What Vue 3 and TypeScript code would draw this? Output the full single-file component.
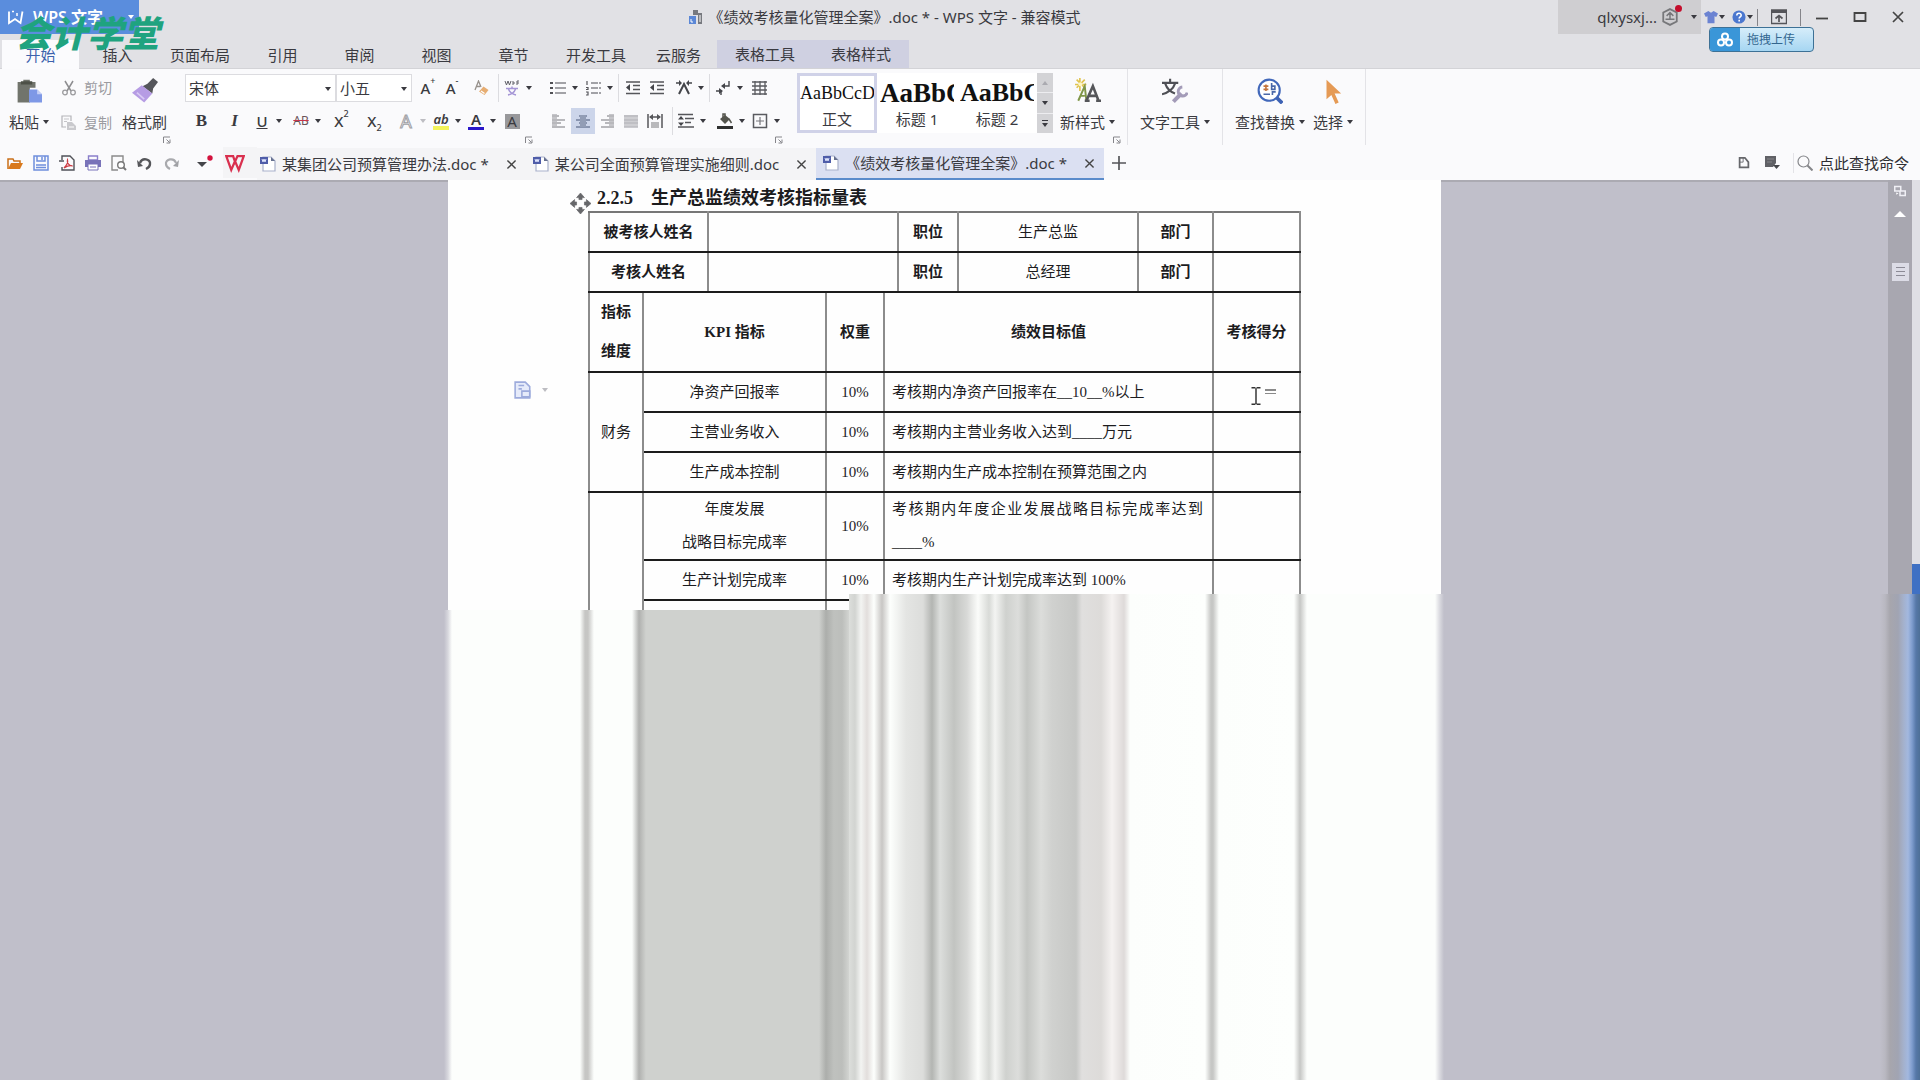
<script setup lang="ts">
import { h, ref } from 'vue'

const glyphs: Record<string, string> = {
  wps: '<path d="M1 2.5V14l6-4 5.5 4L14.500 2.500" fill="none" stroke="#fff" stroke-width="1.800"/><path d="M4 2.500h2M9 4v3" stroke="#fff" stroke-width="1.500"/>',
  docs: '<path d="M1 7h7v8H1z" fill="#5b87d6"/><path d="M5 1h5v5H5zM10 4h4v11h-4z" fill="#77797f"/><path d="M3 10v3h2M12 6v7" stroke="#fff" fill="none"/>',
  avatar: '<path d="M8 1l6 3v8l-6 3-6-3V4z" fill="none" stroke="#77777a" stroke-width="1.600"/><path d="M5 7l3-3 3 3M4 10h8M8 5v5" stroke="#77777a" fill="none" stroke-width="1.300"/>',
  shirt: '<path d="M5 1L0 4l2 4 2-1v8h8V7l2 1 2-4-5-3-3 2z" fill="#6b83d2"/>',
  help: '<circle cx="8" cy="8" r="7.500" fill="#4b77cf"/><path d="M5.500 6.200C5.500 2.800 10.600 3 10.500 6c0 1.800-2.300 1.900-2.300 3.700M8.200 11.200v1.800" fill="none" stroke="#fff" stroke-width="1.800"/>',
  boxup: '<path d="M.5 1h15v13.500H.5z" fill="none" stroke="#55555a" stroke-width="1.400"/><path d="M0 1h16v3H0z" fill="#55555a"/><path d="M8 13V7M4.500 9.500L8 6.500l3.500 3" fill="none" stroke="#55555a" stroke-width="1.700"/>',
  min: '<path d="M2 9.500h12" stroke="#444" stroke-width="1.800"/>',
  max: '<path d="M2.500 4h11v8h-11z" fill="none" stroke="#444" stroke-width="1.800"/>',
  close: '<path d="M3 3l10 10M13 3L3 13" stroke="#444" stroke-width="1.700"/>',
  cloud: '<g fill="none" stroke="#fff" stroke-width="2"><circle cx="8" cy="4.500" r="3"/><circle cx="4" cy="10.500" r="3"/><circle cx="12" cy="10.500" r="3"/></g>',
  paste: '<path d="M1 2.500h3.500V1h4v1.500H12V6H8.500v9H1z" fill="#71746c"/><path d="M3 2h7v2H3z" fill="#4d5047"/><path d="M8 7h5l3 3v5H8z" fill="#7e98e6"/><path d="M13 7v3h3" fill="#c5cff6"/>',
  cut: '<path d="M4 1l6 10M12 1L6 11" stroke="#8d8d90" stroke-width="1.500"/><g fill="none" stroke="#9b9b9e" stroke-width="1.300"><circle cx="4" cy="12.500" r="2.300"/><circle cx="12" cy="12.500" r="2.300"/></g>',
  copy: '<path d="M10 6V1H1v11h4" fill="none" stroke="#b4b4b8" stroke-width="1.200"/><path d="M3 4h5M3 6.500h3" stroke="#c4c4c8"/><path d="M6 7h5l4 4v4H6z" fill="#c9c9cd"/><path d="M8 12h5" stroke="#fff"/>',
  brush: '<path d="M6.500 5l3-1.500L13 0l3 2.500-3 4-.500 3z" fill="#55565b"/><path d="M6 4.500l6.500 5L7.500 15 0 9z" fill="#b69ce4"/><path d="M3 9l4.500 4" stroke="#d9c9f4"/>',
  eraser: '<path d="M2 10L5.500 1 8 7M3.500 6.500H7" stroke="#97918c" fill="none" stroke-width="1.300"/><path d="M6 11.500l4.500-5 5 3.500-4 5z" fill="#e6ad72"/><path d="M8 11l3.500 2.500" stroke="#fff" stroke-width="1.300"/>',
  wen: '<path d="M1 1l1.500 4L4 1l1.500 4L7 1M9 1v4M9 3h2M13 1v4M13 1h2M13 3h2" stroke="#606068" fill="none"/><path d="M2 8.500h12M8 6.500v2M4.500 9c1 3 3 5 7.500 6M11.500 9c-1 3-3 5-7.500 6" fill="none" stroke="#a596d6" stroke-width="1.500"/>',
  bullets: '<path d="M0 2h3v2H0zM0 7h3v2H0zM0 12h3v2H0z" fill="#505055"/><path d="M5 3h11M5 8h11M5 13h11" stroke="#85858a" stroke-width="1.500"/>',
  numbers: '<path d="M2 1v4M1 7.500h2v2H1M1 12h2v3H1" stroke="#55555a" fill="none" stroke-width="1.200"/><path d="M6 3h10M6 8h10M6 13h10" stroke="#85858a" stroke-width="1.500" stroke-dasharray="7 1"/>',
  outdent: '<path d="M1 2h14M8 5.500h7M8 9.500h7M1 13.500h14" stroke="#55565a" stroke-width="1.700"/><path d="M5 4l-4 3.500L5 11z" fill="#44454a"/>',
  spacing: '<path d="M3 14L8 4l5 10" fill="none" stroke="#44454a" stroke-width="2"/><path d="M0 3h3M13 3h3" stroke="#44454a" stroke-width="1.500"/><path d="M3 0l3 3-3 3zM13 0l-3 3 3 3z" fill="#44454a"/>',
  wrap: '<path d="M14 1v5H9M1 11h5v4" fill="none" stroke="#44454a" stroke-width="1.400"/><path d="M10 3L6 6l4 3zM4 8l4 3-4 3z" fill="#44454a"/>',
  grid: '<path d="M1 2h15M1 6h15M1 10h15M1 14h15M4 1v14M9 1v14M14 1v14" stroke="#5a5b60" stroke-width="1.300"/>',
  left: '<path d="M1 1h5v14H1z" fill="#c5c5c9"/><path d="M1 3h7M1 7h13M1 10h9M1 14h13" stroke="#b8b8bc" stroke-width="2"/>',
  center: '<path d="M4 3h8M1 7h14M4 10h8M1 14h14" stroke="#8995b0" stroke-width="2"/><path d="M5 2h6v12H5z" fill="#929db5"/>',
  right: '<path d="M10 1h5v14h-5z" fill="#c5c5c9"/><path d="M8 3h7M2 7h13M6 10h9M2 14h13" stroke="#b8b8bc" stroke-width="2"/>',
  justify: '<path d="M1 2h14v12H1z" fill="#ceced2"/><path d="M1 3h14M1 7h14M1 10h14M1 14h14" stroke="#bbbbc0" stroke-width="1.500"/>',
  distribute: '<path d="M1 1v14M15 1v14M3 4h10" stroke="#55565a" stroke-width="1.500"/><path d="M6 1L2 4l4 3zM10 1l4 3-4 3z" fill="#55565a"/><path d="M4 9h8v6H4z" fill="#b9b9bc"/>',
  lines: '<path d="M0 1.500h15M7 5.500h9M7 9.500h6M0 14h16" stroke="#55565a" stroke-width="1.600"/><path d="M3 3l3 3.500H0zM3 13l3-3.500H0z" fill="#44454a"/>',
  bucket: '<path d="M3 6l5-4 5 4-5 5z" fill="#54554e"/><path d="M6 5V1h2v3M12 6l2.500 4" stroke="#54554e" stroke-width="1.500" fill="none"/><path d="M0 13h16v3H0z" fill="#2f3030"/>',
  border: '<path d="M1.500 1.500h13v13h-13z" fill="none" stroke="#5a5b60" stroke-width="1.500"/><path d="M8 4v8M4 8h8" stroke="#77777c" stroke-width="1.200"/>',
  launch: '<path d="M1 14V2h13" fill="none" stroke="#85858a" stroke-width="2"/><path d="M14 7v7H7M7 7l6 6" fill="none" stroke="#85858a" stroke-width="2"/>',
  newstyle: '<path d="M3 0v8M0 4h7M1 1l5 5M6 1L1 6" stroke="#e0c34e" stroke-width="1"/><circle cx="3.300" cy="3.800" r="1.200" fill="#fff6c5"/><path d="M2 14l4-9 1 9M3 11h3" fill="none" stroke="#7f9648" stroke-width="1.200"/><path d="M7 14l4-9 3.500 9M8.500 11h5M6 14h3M13 14h3" fill="none" stroke="#55565a" stroke-width="1.600"/>',
  texttool: '<path d="M0 3h10M5 .5V3M2 3.500c1 3 3 5 6 6M8 3.500c-1 3-4 5.500-8 6.500" fill="none" stroke="#4e4f55" stroke-width="1.300"/><path d="M7 14.500l5-5" stroke="#a39bb8" stroke-width="2.500"/><path d="M12.500 5.500a2.800 2.800 0 1 0 3 3.500" fill="none" stroke="#a39bb8" stroke-width="1.800"/>',
  find: '<circle cx="7.500" cy="7.500" r="6.500" fill="#fff" stroke="#4268ba" stroke-width="1.300"/><path d="M12 12l3.500 3.500" stroke="#3d62b4" stroke-width="2.300"/><path d="M4 5h3M4 7h3M5.500 4v4" stroke="#c3743d"/><path d="M9 3v4h2V5H9M4 10h4M9.500 10.500V8.500h2" fill="none" stroke="#4a68a8"/>',
  pointer: '<path d="M4 1v12l3-2.500L9.500 16l2-1L9 9.500h4z" fill="#e59a55"/>',
  open: '<path d="M1 14V4h5l1 2h6v2" fill="none" stroke="#c96f18" stroke-width="1.500"/><path d="M4 8h12l-3 6H1z" fill="#d9791c"/>',
  save: '<path d="M1 1h14v14H1z" fill="none" stroke="#6f8fdc" stroke-width="1.500"/><path d="M4 1v5h8V1M9 2v3M3 10h10M3 12.500h10" fill="none" stroke="#6f8fdc" stroke-width="1.500"/>',
  pdf: '<path d="M3 5V1h8l4 4v10H3v-3" fill="none" stroke="#505258" stroke-width="1.400"/><path d="M0 6h5" stroke="#505258" stroke-width="1.500"/><path d="M5 13c3-3 4-6 3.500-8-1 3 2 6 5 6-3-1-6 .5-8.500 2z" fill="none" stroke="#cc3c44" stroke-width="1.300"/>',
  print: '<path d="M3.500 1h9v4h-9z" fill="none" stroke="#8a7fca" stroke-width="1.400"/><path d="M0 5h16v7H0z" fill="#7973b9"/><path d="M3 9h10v6H3z" fill="#fff" stroke="#7973b9"/><path d="M5 12h6" stroke="#7973b9"/>',
  preview: '<path d="M12 7V1H1v14h6" fill="none" stroke="#8a8a8a" stroke-width="1.400"/><circle cx="10" cy="10" r="3.300" fill="#fff" stroke="#777" stroke-width="1.400"/><path d="M12 12l3 3" stroke="#777" stroke-width="2"/>',
  undo: '<path d="M3 8c2-6 11-4 10 1 0 3-2 4-4 5" fill="none" stroke="#55565a" stroke-width="2.400"/><path d="M0 5l6 6-5 1z" fill="#55565a"/>',
  redo: '<path d="M13 8C11 2 2 4 3 9c0 3 2 4 4 5" fill="none" stroke="#a9aaae" stroke-width="2.200"/><path d="M16 5l-6 6 5 1z" fill="#a0a1a5"/>',
  more: '<path d="M0 7h10l-5 5z" fill="#44454a"/><circle cx="13" cy="3" r="2.700" fill="#d3123d"/>',
  wlogo: '<path d="M1 2.500l4 11 3-7 3 7 4-11h-5L8 7 6.500 2.500z" fill="none" stroke="#d9304f" stroke-width="1.800"/>',
  doc: '<path d="M3 1h8l4 4v10H3z" fill="#fff" stroke="#a9b1cb" stroke-width="1.200"/><path d="M11 1v4h4z" fill="#66708f"/><path d="M0 1h8v7H0z" fill="#4f5da9"/><path d="M2 3l1 3 1-3 1 3 1-3" stroke="#dce2fb" fill="none"/>',
  plus: '<path d="M8 1v14M1 8h14" stroke="#55565a" stroke-width="1.700"/>',
  history: '<path d="M3 2h6l4 5v6H3z" fill="none" stroke="#66676b" stroke-width="2"/><path d="M3 7h4V2" stroke="#66676b" fill="none"/>',
  panel: '<path d="M1 1h11v7L9 12H1z" fill="#606166"/><path d="M3 4h7M3 7h5" stroke="#85868a"/><path d="M9 10h7l-3.500 4z" fill="#44454a"/>',
  search: '<circle cx="6.500" cy="6.500" r="5.500" fill="none" stroke="#85868a" stroke-width="1.200"/><path d="M10.500 10.500l5 5" stroke="#85868a" stroke-width="2"/>',
  move: '<path d="M8 0l3 3.500H9.200V5H6.800V3.500H5zM8 16l3-3.500H9.200V11H6.800v1.500H5zM0 8l3.500-3v1.800H5v2.400H3.500V11zM16 8l-3.500-3v1.800H11v2.400h1.500V11z" fill="#66676a" stroke="#66676a" stroke-width=".5"/>',
  clip: '<path d="M1 1h9l4 4v10H1z" fill="#e6ebfa" stroke="#9dabdc" stroke-width="1.400"/><path d="M4 4h5M4 7h3M7 9h7v5H7z" fill="none" stroke="#9dabdc" stroke-width="1.400"/>',
  ibeam: '<path d="M4 .7h3.500M8.500 .7H12M8 1v14M4 15.300h3.500M8.500 15.300H12" stroke="#333" stroke-width="1.300"/>',
  windows: '<path d="M1 2h8v6H1zM8 8h7v6H8z" fill="none" stroke="#f0f0f5" stroke-width="2"/><path d="M6 11l-3-1v3z" fill="#fff"/>',
}

const Ic = (p: { n: string }) =>
  h('svg', { class: 'ic', viewBox: '0 0 16 16', 'aria-hidden': 'true', innerHTML: glyphs[p.n] })

const menuTabs = ['开始', '插入', '页面布局', '引用', '审阅', '视图', '章节', '开发工具', '云服务']
const contextTabs = ['表格工具', '表格样式']
const activeMenu = ref('开始')
const fontName = ref('宋体')
const fontSize = ref('小五')

const quick = [
  ['open', '打开'], ['save', '保存'], ['pdf', '输出为PDF'], ['print', '打印'],
  ['preview', '打印预览'], ['undo', '撤销'], ['redo', '恢复'],
]
const docTabs = [
  '某集团公司预算管理办法.doc *',
  '某公司全面预算管理实施细则.doc',
  '《绩效考核量化管理全案》.doc *',
]
const activeDoc = ref(2)

const financeRows = [
  { kpi: '净资产回报率', goal: '考核期内净资产回报率在__10__%以上' },
  { kpi: '主营业务收入', goal: '考核期内主营业务收入达到____万元' },
  { kpi: '生产成本控制', goal: '考核期内生产成本控制在预算范围之内' },
]
</script>

<template>
  <div class="app">
    <header class="titlebar">
      <button class="brand"><Ic n="wps" /><span>WPS 文字</span><i class="caret"></i></button>
      <h1><Ic n="docs" />《绩效考核量化管理全案》.doc * - WPS 文字 - 兼容模式</h1>
      <div class="window-tools">
        <button class="user">qlxysxj...<Ic n="avatar" /><i class="dot"></i><i class="caret"></i></button>
        <button class="wt small" aria-label="皮肤"><Ic n="shirt" /><i class="caret"></i></button>
        <button class="wt small" aria-label="帮助"><Ic n="help" /><i class="caret"></i></button>
        <i class="bar"></i>
        <button class="wt" aria-label="隐藏功能区"><Ic n="boxup" /></button>
        <i class="bar"></i>
        <button class="wt" aria-label="最小化"><Ic n="min" /></button>
        <button class="wt narrow" aria-label="最大化"><Ic n="max" /></button>
        <button class="wt" aria-label="关闭"><Ic n="close" /></button>
      </div>
      <button class="upload"><span class="cloud"><Ic n="cloud" /></span><span>拖拽上传</span></button>
      <div class="watermark">会计学堂</div>
    </header>

    <nav class="menu">
      <button v-for="t in menuTabs" :key="t" :class="{ active: activeMenu === t }" @click="activeMenu = t">{{ t }}</button>
      <button v-for="t in contextTabs" :key="t" class="context" @click="activeMenu = t">{{ t }}</button>
    </nav>

    <section class="ribbon">
      <div class="group clipboard">
        <button class="big"><Ic n="paste" /><span>粘贴<i class="caret"></i></span></button>
        <div class="stack">
          <button disabled><Ic n="cut" />剪切</button>
          <button disabled><Ic n="copy" />复制</button>
        </div>
        <button class="big"><Ic n="brush" /><span>格式刷</span></button>
        <button class="launcher" aria-label="剪贴板设置"><Ic n="launch" /></button>
      </div>

      <div class="group font">
        <div class="row">
          <label class="combo name"><select v-model="fontName" aria-label="字体"><option>宋体</option><option>黑体</option></select><i class="caret"></i></label>
          <label class="combo size"><select v-model="fontSize" aria-label="字号"><option>小五</option><option>五号</option></select><i class="caret"></i></label>
          <i class="gap"></i>
          <button class="cell letter">A<sup>+</sup></button>
          <button class="cell letter">A<sup>-</sup></button>
          <button class="cell loose" aria-label="清除格式"><Ic n="eraser" /></button>
          <i class="sep"></i>
          <button class="split" aria-label="拼音指南"><Ic n="wen" /><i class="caret"></i></button>
        </div>
        <div class="row">
          <button class="cell loose serif"><b>B</b></button>
          <button class="cell loose serif"><b><em>I</em></b></button>
          <button class="split letter"><span class="under">U</span><i class="caret"></i></button>
          <i class="gap"></i>
          <button class="split"><s class="strike">AB</s><i class="caret"></i></button>
          <button class="cell loose letter">X<sup>2</sup></button>
          <button class="cell loose letter">X<sub>2</sub></button>
          <i class="gap"></i>
          <button class="split"><span class="outline">A</span><i class="caret pale"></i></button>
          <button class="split"><span class="mark">ab</span><i class="caret"></i></button>
          <button class="split"><span class="ink">A</span><i class="caret"></i></button>
          <button class="cell"><span class="shade">A</span></button>
        </div>
        <button class="launcher" aria-label="字体设置"><Ic n="launch" /></button>
      </div>

      <div class="group para">
        <div class="row">
          <button class="split" aria-label="项目符号"><Ic n="bullets" /><i class="caret"></i></button>
          <button class="split" aria-label="编号"><Ic n="numbers" /><i class="caret"></i></button>
          <i class="sep"></i>
          <button class="cell" aria-label="减少缩进"><Ic n="outdent" /></button>
          <button class="cell" aria-label="增加缩进"><Ic n="outdent" /></button>
          <i class="gap"></i>
          <button class="split" aria-label="中文版式"><Ic n="spacing" /><i class="caret"></i></button>
          <i class="sep"></i>
          <button class="split" aria-label="换行"><Ic n="wrap" /><i class="caret"></i></button>
          <button class="cell" aria-label="插入表格"><Ic n="grid" /></button>
        </div>
        <div class="row">
          <button class="cell" aria-label="左对齐"><Ic n="left" /></button>
          <button class="cell on" aria-label="居中"><Ic n="center" /></button>
          <button class="cell" aria-label="右对齐"><Ic n="right" /></button>
          <button class="cell" aria-label="两端对齐"><Ic n="justify" /></button>
          <button class="cell" aria-label="分散对齐"><Ic n="distribute" /></button>
          <i class="gap"></i>
          <i class="sep"></i>
          <button class="split" aria-label="行距"><Ic n="lines" /><i class="caret"></i></button>
          <i class="gap"></i>
          <button class="split" aria-label="底纹"><Ic n="bucket" /><i class="caret"></i></button>
          <button class="split" aria-label="边框"><Ic n="border" /><i class="caret"></i></button>
        </div>
        <button class="launcher" aria-label="段落设置"><Ic n="launch" /></button>
      </div>

      <div class="gallery">
        <button class="style chosen"><span class="sample">AaBbCcD</span>正文</button>
        <button class="style"><span class="sample h1">AaBbC</span>标题 1</button>
        <button class="style"><span class="sample h2">AaBbC</span>标题 2</button>
        <div class="scroller">
          <button aria-label="上一行"><i class="caret up"></i></button>
          <button aria-label="下一行"><i class="caret"></i></button>
          <button aria-label="更多样式"><i class="dash"></i><i class="caret"></i></button>
        </div>
      </div>

      <div class="group newstyle">
        <button class="big"><Ic n="newstyle" /><span>新样式<i class="caret"></i></span></button>
        <button class="launcher" aria-label="样式设置"><Ic n="launch" /></button>
      </div>
      <div class="group tools">
        <button class="big"><Ic n="texttool" /><span>文字工具<i class="caret"></i></span></button>
      </div>
      <div class="group tools">
        <button class="big"><Ic n="find" /><span>查找替换<i class="caret"></i></span></button>
        <button class="big"><Ic n="pointer" /><span>选择<i class="caret"></i></span></button>
      </div>
    </section>

    <div class="docbar">
      <div class="quick">
        <button v-for="q in quick" :key="q[0]" :aria-label="q[1]"><Ic :n="q[0]" /></button>
      </div>
      <button class="custom" aria-label="自定义快速访问"><Ic n="more" /></button>
      <button class="home" aria-label="首页"><Ic n="wlogo" /></button>
      <div v-for="(d, i) in docTabs" :key="d" class="doctab" :class="{ active: activeDoc === i }">
        <button class="docname" @click="activeDoc = i"><Ic n="doc" />{{ d }}</button>
        <button class="x" aria-label="关闭文档"><Ic n="close" /></button>
      </div>
      <button class="add" aria-label="新建"><Ic n="plus" /></button>
      <div class="docbar-end">
        <button aria-label="历史"><Ic n="history" /></button>
        <button aria-label="窗格"><Ic n="panel" /></button>
        <label class="find"><Ic n="search" /><input type="text" placeholder="点此查找命令" aria-label="点此查找命令" /></label>
      </div>
    </div>

    <main class="workspace">
      <div class="desk">
        <article class="page">
          <div class="move"><Ic n="move" /></div>
          <h2><span>2.2.5</span>生产总监绩效考核指标量表</h2>
          <table>
            <colgroup>
              <col class="c1" /><col class="c2" /><col class="c3" /><col class="c4" /><col class="c5" />
              <col class="c6" /><col class="c7" /><col class="c8" /><col class="c9" />
            </colgroup>
            <tbody>
              <tr>
                <th colspan="2">被考核人姓名</th><td colspan="3"></td><th>职位</th><td>生产总监</td><th>部门</th><td></td>
              </tr>
              <tr>
                <th colspan="2">考核人姓名</th><td colspan="3"></td><th>职位</th><td>总经理</td><th>部门</th><td></td>
              </tr>
              <tr class="head">
                <th>指标<br />维度</th><th colspan="2">KPI 指标</th><th>权重</th><th colspan="4">绩效目标值</th><th>考核得分</th>
              </tr>
              <tr v-for="(r, i) in financeRows" :key="r.kpi">
                <td v-if="i === 0" rowspan="3">财务</td>
                <td colspan="2">{{ r.kpi }}</td><td>10%</td><td colspan="4" class="goal">{{ r.goal }}</td><td></td>
              </tr>
              <tr class="double">
                <td rowspan="3"></td>
                <td colspan="2">年度发展<br />战略目标完成率</td><td>10%</td>
                <td colspan="4" class="goal"><span class="spread">考核期内年度企业发展战略目标完成率达到</span>____%</td><td></td>
              </tr>
              <tr>
                <td colspan="2">生产计划完成率</td><td>10%</td><td colspan="4" class="goal">考核期内生产计划完成率达到 100%</td><td></td>
              </tr>
              <tr class="rest"><td colspan="2"></td><td></td><td colspan="4"></td><td></td></tr>
            </tbody>
          </table>
          <button class="clip" aria-label="粘贴选项"><Ic n="clip" /><i class="caret pale"></i></button>
          <div class="ibeam"><Ic n="ibeam" /><i></i></div>
          <div class="smear left"></div>
          <div class="smear right"></div>
        </article>
      </div>
      <aside class="scroll">
        <Ic n="windows" />
        <i class="tri"></i>
        <i class="thumb"></i>
      </aside>
      <div class="edge"></div>
      <div class="edge-smear"></div>
    </main>
  </div>
</template>

<style>
body {
  margin: 0;
}
</style>

<style scoped>
.app {
  display: flex;
  flex-direction: column;
  height: 100vh;
  overflow: hidden;
  font: 15px/20px "Noto Sans", "Noto Sans CJK SC", sans-serif;
  color: #3a3a40;
  background: #e1e1e5;
}
* {
  box-sizing: border-box;
}
button {
  display: flex;
  align-items: center;
  padding: 0;
  border: 0;
  background: none;
  font: inherit;
  color: inherit;
  white-space: nowrap;
}
.ic {
  display: block;
  flex: none;
  width: 16px;
  height: 16px;
}
.caret {
  flex: none;
  width: 0;
  border: 3px solid transparent;
  border-top: 4px solid #3a3a40;
  border-bottom: 0;
}
.caret.pale {
  border-top-color: #bdbdc2;
}
.caret.up {
  border-top: 0;
  border-bottom: 4px solid #aaaab0;
}

.titlebar {
  position: relative;
  display: flex;
  justify-content: space-between;
  height: 40px;
  flex: none;
}
.brand {
  width: 139px;
  height: 34px;
  padding-left: 8px;
  gap: 9px;
  background: #5a8ddd;
  color: #fff;
  font-size: 16px;
  font-weight: 600;
}
.brand .caret {
  margin-left: auto;
  margin-right: 5px;
  border-top-color: #fff;
}
h1 {
  display: flex;
  align-items: center;
  gap: 4px;
  height: 34px;
  margin: 0 0 0 72px;
  font-size: 15px;
  font-weight: 400;
  white-space: nowrap;
}
.window-tools {
  display: flex;
  align-items: center;
  height: 34px;
  padding-right: 1px;
}
.user {
  position: relative;
  width: 143px;
  height: 34px;
  padding-right: 4px;
  justify-content: flex-end;
  gap: 4px;
  background: #cfced1;
}
.user .ic {
  width: 18px;
  height: 18px;
}
.user .caret {
  margin-left: 8px;
}
.dot {
  position: absolute;
  right: 19px;
  top: 5px;
  width: 7px;
  height: 7px;
  border-radius: 50%;
  background: #c40d2c;
}
.wt {
  width: 42px;
  height: 34px;
  justify-content: center;
}
.wt.small {
  width: 28px;
  gap: 1px;
}
.wt.small .ic {
  width: 14px;
  height: 14px;
}
.wt.narrow {
  width: 34px;
}
.bar {
  width: 1px;
  height: 17px;
  background: #85858a;
}
.upload {
  position: absolute;
  right: 106px;
  top: 27px;
  z-index: 3;
  width: 105px;
  height: 25px;
  gap: 7px;
  overflow: hidden;
  border: 1px solid #3d7196;
  border-radius: 4px;
  background: linear-gradient(#d6edfa, #a6d6f2);
  color: #33668f;
  font-size: 12px;
}
.cloud {
  display: grid;
  place-items: center;
  width: 30px;
  height: 25px;
  background: #3a96d8;
}
.cloud .ic {
  width: 20px;
}
.watermark {
  position: absolute;
  left: 15px;
  top: 9px;
  z-index: 3;
  color: #1fa37f;
  font: italic 900 36px/44px "Noto Sans CJK SC", sans-serif;
  white-space: nowrap;
  pointer-events: none;
}

.menu {
  display: flex;
  flex: none;
  height: 29px;
  padding-left: 2px;
  border-bottom: 1px solid #d3d3d7;
}
.menu button {
  justify-content: center;
  min-width: 77px;
  height: 29px;
  padding: 0 14px;
}
.menu .active {
  background: #fbfbfd;
  color: #3c62ad;
}
.menu .context {
  width: 96px;
  height: 28px;
  background: #cfd0e1;
}

.ribbon {
  display: flex;
  flex: none;
  height: 76px;
  background: #fafafc;
}
.group {
  position: relative;
  flex: none;
  padding-top: 3px;
}
.clipboard {
  display: flex;
  width: 185px;
  padding-left: 7px;
}
.font {
  width: 362px;
}
.para {
  width: 250px;
}
.newstyle,
.tools {
  display: flex;
  gap: 4px;
  padding-left: 5px;
  padding-right: 10px;
  border-right: 1px solid #e3e3e7;
}
.tools {
  padding-left: 10px;
}
.big {
  flex-direction: column;
  height: 68px;
  padding: 6px 2px 0;
  gap: 8px;
}
.big .ic {
  width: 26px;
  height: 26px;
}
.big span {
  display: flex;
  align-items: center;
  gap: 4px;
}
.stack {
  display: flex;
  flex-direction: column;
  gap: 3px;
  width: 69px;
  padding-left: 10px;
  flex: none;
}
.stack button {
  height: 32px;
  gap: 7px;
  font-size: 14px;
  color: #9b9ba0;
}
.launcher {
  position: absolute;
  right: 14px;
  bottom: 1px;
}
.newstyle .launcher {
  right: 6px;
}
.launcher .ic {
  width: 8px;
  height: 8px;
}
.row {
  display: flex;
  align-items: center;
  height: 32px;
}
.row + .row {
  margin-top: 1px;
}
.combo {
  position: relative;
  height: 28px;
  border: 1px solid #dcdce0;
  background: #fff;
}
.combo.name {
  width: 151px;
}
.combo.size {
  width: 76px;
}
.combo select {
  width: 100%;
  height: 26px;
  padding: 0 3px;
  border: 0;
  background: none;
  appearance: none;
  font: inherit;
  color: inherit;
}
.combo .caret {
  position: absolute;
  right: 4px;
  top: 12px;
}
.cell {
  width: 24px;
  height: 26px;
  justify-content: center;
}
.cell.loose {
  width: 33px;
}
.cell.on {
  background: #ccd5ea;
}
.split {
  width: 35px;
  height: 26px;
  padding-left: 3px;
  gap: 6px;
}
.split > :first-child {
  width: 16px;
  text-align: center;
}
.gap {
  width: 4px;
}
.sep {
  width: 1px;
  height: 28px;
  margin: 0 2px 0 1px;
  background: #dcdce0;
}
.letter {
  font-size: 15px;
  font-weight: 500;
}
.letter sup,
.letter sub {
  font-size: 9px;
  line-height: 12px;
}
.letter sup {
  align-self: flex-start;
}
.letter sub {
  align-self: flex-end;
}
.serif {
  font: 17px/20px "Liberation Serif", serif;
}
.under {
  text-decoration: underline;
}
.strike {
  color: #6b5358;
  text-decoration-color: #c8354c;
  font-size: 12px;
}
.outline {
  color: #fafafc;
  -webkit-text-stroke: 1px #a0a0a5;
  font-size: 18px;
}
.mark,
.ink {
  height: 18px;
  font-size: 13px;
  line-height: 14px;
  font-weight: 600;
}
.mark {
  border-bottom: 4px solid #f3f35b;
  font-style: italic;
}
.ink {
  border-bottom: 3px solid #2a17c9;
  font-size: 15px;
}
.shade {
  width: 15px;
  background: #98989b;
  line-height: 15px;
}

.gallery {
  display: flex;
  flex: none;
  height: 60px;
  margin-top: 4px;
}
.style {
  flex-direction: column;
  width: 80px;
  overflow: hidden;
  border: 3px solid #fff;
  background: #fff;
}
.style.chosen {
  border-color: #d0d2e8;
}
.sample {
  align-self: flex-start;
  height: 33px;
  font: 18px/34px "Liberation Serif", serif;
  color: #111;
}
.sample.h1 {
  font-size: 27px;
  font-weight: 700;
}
.sample.h2 {
  font-size: 26px;
  font-weight: 700;
}
.scroller {
  display: flex;
  flex-direction: column;
  gap: 1px;
  width: 16px;
  background: #ededf0;
}
.scroller button {
  flex: 1;
  flex-direction: column;
  justify-content: center;
  gap: 2px;
  background: #d3d3d6;
}
.dash {
  width: 6px;
  height: 1px;
  background: #3a3a40;
}

.docbar {
  display: flex;
  flex: none;
  align-items: center;
  height: 35px;
  background: #fafafc;
}
.quick {
  display: flex;
  gap: 10px;
  padding-left: 7px;
}
.custom {
  margin-left: 18px;
}
.home {
  width: 34px;
  height: 31px;
  margin-left: 10px;
  padding-left: 2px;
  background: #f4f4f6;
}
.home .ic {
  width: 20px;
  height: 20px;
}
.doctab {
  display: flex;
  height: 32px;
  margin-top: 3px;
  padding: 0 8px 0 3px;
  gap: 16px;
  background: #f4f4f6;
}
.doctab + .doctab {
  padding-left: 7px;
}
.docname {
  gap: 6px;
}
.x .ic {
  width: 13px;
  height: 13px;
}
.doctab.active {
  border-bottom: 2px solid #5a8bcb;
  background: #dbe0f2;
}
.add {
  margin-left: 7px;
}
.docbar-end {
  display: flex;
  align-items: center;
  gap: 13px;
  margin-left: auto;
}
.docbar-end > button:first-child .ic {
  width: 14px;
  height: 14px;
}
.find {
  display: flex;
  align-items: center;
  gap: 6px;
  padding-left: 3px;
  border-left: 1px solid #e3e3e7;
}
.find input {
  width: 101px;
  padding: 0;
  border: 0;
  outline: 0;
  background: none;
  font: inherit;
  color: #2e2e33;
}
.find input::placeholder {
  color: #2e2e33;
}

.workspace {
  position: relative;
  display: flex;
  flex: 1;
  min-height: 0;
  background: #c0bfca;
  box-shadow: inset 0 2px 0 #abaab2;
}
.desk {
  display: flex;
  flex: 1;
  justify-content: center;
  padding-left: 1px;
}
.page {
  position: relative;
  width: 993px;
  padding: 8px 141px 0 140px;
  background: #fefefe;
  color: #1c1c1e;
}
h2 {
  display: flex;
  gap: 18px;
  margin: 0 0 3px;
  padding-left: 9px;
  font: 700 18px/20px "Liberation Serif", "Noto Sans CJK SC", serif;
  white-space: nowrap;
}
table {
  width: 713px;
  table-layout: fixed;
  border-collapse: collapse;
  font: 15px/20px "Liberation Serif", "Noto Sans CJK SC", serif;
}
.c1 { width: 54px; }
.c2 { width: 65px; }
.c3 { width: 118px; }
.c4 { width: 58px; }
.c5 { width: 14px; }
.c6 { width: 60px; }
.c7 { width: 180px; }
.c8 { width: 75px; }
.c9 { width: 87px; }
th,
td {
  height: 40px;
  padding: 0;
  border: 2px solid #1c1c1c;
  border-left-color: #8c8c8c;
  border-right-color: #8c8c8c;
  text-align: center;
}
tr:first-child > * {
  border-top-color: #777;
}
.head > * {
  height: 80px;
  line-height: 39px;
}
.double > * {
  height: 68px;
  line-height: 33px;
}
.rest > * {
  border-bottom: 0;
}
.goal {
  padding: 0 9px 0 7px;
  text-align: left;
}
.spread {
  display: block;
  text-align: justify;
  text-align-last: justify;
  white-space: nowrap;
}
.move {
  position: absolute;
  left: 122px;
  top: 13px;
}
.move .ic {
  width: 21px;
  height: 21px;
}
.clip {
  position: absolute;
  left: 66px;
  top: 201px;
  gap: 10px;
}
.clip .ic {
  width: 18px;
  height: 18px;
}
.ibeam {
  position: absolute;
  left: 799px;
  top: 207px;
  display: flex;
}
.ibeam .ic {
  width: 18px;
  height: 18px;
}
.ibeam i {
  width: 11px;
  height: 5px;
  margin-top: 2px;
  border-top: 2px solid #8a8a8a;
  border-bottom: 1px solid #8a8a8a;
}
.smear {
  position: absolute;
  bottom: 0;
}
.smear.left {
  left: -4px;
  width: 405px;
  top: 430px;
  background: linear-gradient(90deg,
    #c0bfca, #d8d8de 4px, #fcfefc 8px, #fcfefc 136px, #c6c6c4 141px, #c6c6c4 144px, #fcfefc 150px,
    #fcfefc 188px, #b0b1af 195px, #cfd1ce 202px, #cfd1ce 375px, #acaeab 382px, #bfc1be 390px, #bcbebb 398px, #d2d4d1 405px);
}
.smear.right {
  left: 401px;
  right: -4px;
  top: 414px;
  background: linear-gradient(90deg,
    #dcdedb, #d2d4d1 6px, #f3f4f2 12px, #e2dedc 18px, #fdfffd 25px, #c8c6c4 33px, #fdfffd 41px,
    #e4e5e3 57px, #dcdddb 74px, #b3b5b2 83px, #dcdedc 91px, #c2c4c1 105px, #d8d9d7 118px, #fbfcfa 129px,
    #d8dad7 140px, #f3f4f2 146px, #cfd1ce 157px, #dcdddb 169px, #c4c6c3 178px, #dcdddb 192px, #d0d1cf 203px,
    #c6c7c5 227px, #e0dfde 233px, #dddbd9 252px, #f5f2f1 263px, #dedad9 275px, #fcfefc 281px,
    #fdfffd 356px, #c6c7c5 362px, #c6c7c5 364px, #fcfefc 370px, #fdfffd 445px, #c6c7c5 451px,
    #fcfefc 458px, #fcfefc 586px, #d8d8de 591px, #c0bfca 595px);
}
.scroll {
  display: flex;
  flex-direction: column;
  align-items: center;
  width: 24px;
  padding-top: 5px;
  background: #a8a7b0;
}
.scroll .ic {
  width: 12px;
  height: 12px;
}
.tri {
  margin-top: 14px;
  border: 6px solid transparent;
  border-top: 0;
  border-bottom: 6px solid #fff;
}
.thumb {
  width: 17px;
  height: 18px;
  margin-top: 46px;
  border: 4px solid #dcdce6;
  background: repeating-linear-gradient(#8c8b96 0 1px, #dcdce6 1px 4px);
}
.edge {
  width: 8px;
  background: linear-gradient(#dfdfe5 384px, #3f71c4 384px);
}
.edge-smear {
  position: absolute;
  right: 0;
  top: 414px;
  bottom: 0;
  width: 40px;
  background: linear-gradient(90deg, #c0bfca, #b9b8c1 5px, #a7a6ad 10px, #a1a4b2 18px, #a4b0ca 23px, #a3b8df 28px, #7f9dce 32px, #5678a8 36px, #4e7097);
}
</style>
